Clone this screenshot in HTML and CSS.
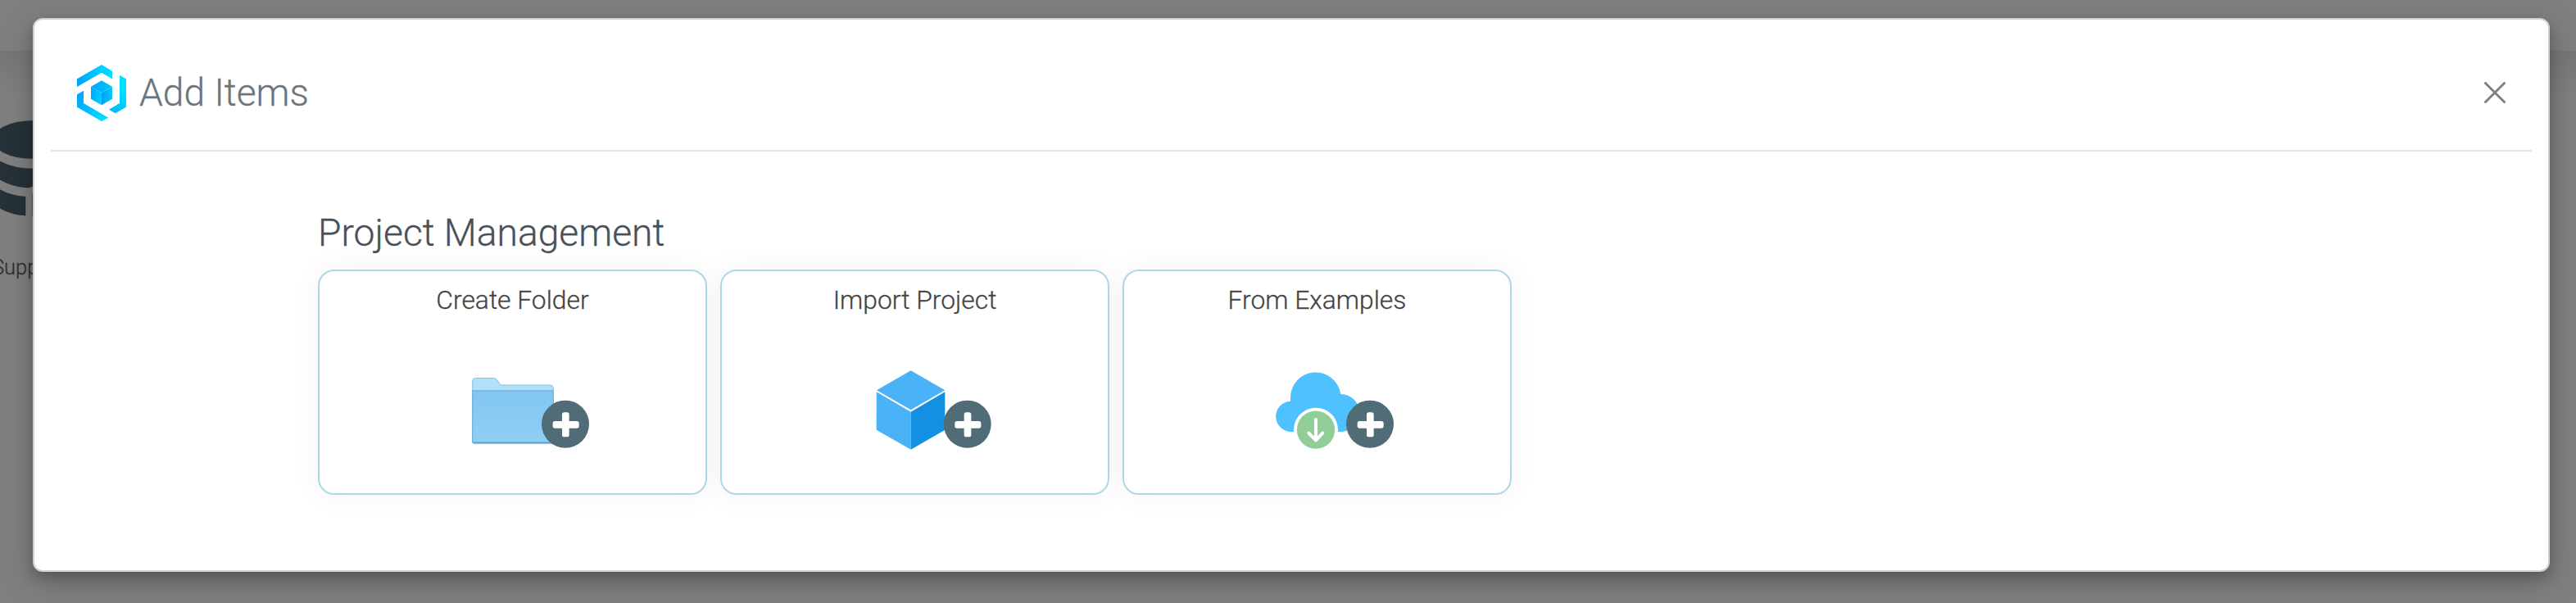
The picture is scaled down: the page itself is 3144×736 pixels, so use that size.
FILE: index.html
```html
<!DOCTYPE html>
<html lang="en">
<head>
<meta charset="utf-8">
<title>Add Items</title>
<link rel="stylesheet" href="styles.css">
</head>
<body>
<div class="page">
  <div class="page-nav"></div>
  <div class="page-body">
    <svg class="database" viewBox="0 420 126 380">
      <ellipse cx="114" cy="511" rx="138" ry="70"/>
      <path d="M-20 578Q40 617 126 617V675Q116 688 98 687Q30 683-20 644Z"/>
      <path d="M-20 680Q25 714 94 719V789Q30 786-20 750Z"/>
      <path class="database-badge" d="M126 706H121Q117 706 117 712V788Q117 794 121 794H126Z"/>
    </svg>
    <span class="page-label">Supp</span>
  </div>
</div>
<div class="modal">
  <header class="modal-header">
    <svg class="logo" viewBox="282 237 180 207">
      <defs>
        <linearGradient id="ringLow" gradientUnits="userSpaceOnUse" x1="282" y1="346" x2="397" y2="431"><stop offset="0" stop-color="#00a2ff"/><stop offset="1" stop-color="#00e1ff"/></linearGradient>
        <linearGradient id="ringRight" gradientUnits="userSpaceOnUse" x1="399" y1="400" x2="462" y2="340"><stop offset="0" stop-color="#00b4ff"/><stop offset="1" stop-color="#00e1ff"/></linearGradient>
        <linearGradient id="ringTop" gradientUnits="userSpaceOnUse" x1="282" y1="300" x2="411" y2="250"><stop offset="0" stop-color="#00a2ff"/><stop offset="1" stop-color="#00e1ff"/></linearGradient>
        <linearGradient id="cubeTop" x1="0" y1="0" x2="1" y2="0"><stop offset="0" stop-color="#00a8ff"/><stop offset="1" stop-color="#00c4fd"/></linearGradient>
        <linearGradient id="cubeLeft" x1="0" y1="0" x2="1" y2="0"><stop offset="0" stop-color="#00a6ff"/><stop offset="1" stop-color="#00d2ff"/></linearGradient>
        <linearGradient id="cubeRight" x1="0" y1="0" x2="1" y2="0"><stop offset="0" stop-color="#009cf5"/><stop offset="1" stop-color="#00cdfb"/></linearGradient>
      </defs>
      <path fill="url(#ringTop)" d="M282 289 372 237 411 260V289L372 266 282 318Z"/>
      <path fill="url(#ringRight)" d="M438 275 462 289V392L422 415 399 401 438 378Z"/>
      <path fill="url(#ringLow)" d="M306 332V378L397 431 372 444 282 392V346Z"/>
      <path fill="url(#cubeLeft)" d="M333 317 372 339.500V385L333 362Z"/>
      <path fill="url(#cubeRight)" d="M411 317 372 339.500V385L411 362Z"/>
      <path fill="url(#cubeTop)" d="M372 295 411 317 372 340 333 317Z"/>
    </svg>
    <h1 class="modal-title">Add Items</h1>
    <svg class="close" viewBox="0 0 26 26"><path d="M1.500 1.500 24.500 24.500M24.500 1.500 1.500 24.500"/></svg>
  </header>
  <main class="modal-body">
    <h2 class="section-title">Project Management</h2>
    <div class="cards">
      <div class="card">
        <span class="card-label">Create Folder</span>
        <svg class="card-icon" viewBox="594 600 480 360">
          <defs><linearGradient id="folder" x1="0" y1="0" x2="0" y2="1"><stop offset="0" stop-color="#82c6f1"/><stop offset="1" stop-color="#90cff6"/></linearGradient></defs>
          <path d="M622 906H914" stroke="#dfe5e9" stroke-width="3"/>
          <path fill="#b2dffb" stroke="#8bbfdf" stroke-width="3" d="M620 714V676Q620 664.500 632 664.500H698Q706 664.500 710 671L718 683Q722 690 730 690H904Q916 690 916 702V714Z"/>
          <path fill="url(#folder)" d="M618 710H918V898Q918 904 912 904H624Q618 904 618 898Z"/>
          <path fill="none" stroke="#76b4dc" stroke-width="4" d="M620 711H916V897Q916 902 911 902H625Q620 902 620 897Z"/>
          <path d="M623 901H913" stroke="#609dc8" stroke-width="5"/>
          <circle class="plus-disc" cx="960" cy="833" r="87"/>
          <g class="plus-mark"><rect x="914" y="822" width="96" height="26" rx="8"/><rect x="948" y="790" width="26" height="90" rx="8"/></g>
        </svg>
      </div>
      <div class="card">
        <span class="card-label">Import Project</span>
        <svg class="card-icon" viewBox="598 360 480 360">
          <path fill="#4ab2f7" d="M756 397 881 469 756 541 631 469Z"/>
          <path fill="#4ab2f7" d="M630 475 756 548V686L630 614Z"/>
          <path fill="#1490e2" d="M881 475 756 548V686L881 614Z"/>
          <circle class="plus-disc" cx="963" cy="593" r="87"/>
          <g class="plus-mark"><rect x="917" y="582" width="96" height="26" rx="8"/><rect x="951" y="550" width="26" height="90" rx="8"/></g>
        </svg>
      </div>
      <div class="card">
        <span class="card-label">From Examples</span>
        <svg class="card-icon" viewBox="600 360 480 360">
          <path fill="#50c1ff" d="M680 621A56 56 0 0 1 675 509V500A92.500 92.500 0 0 1 859 483A69 69 0 0 1 859 621Z"/>
          <path fill="#fff" d="M687 622V614A81 81 0 0 1 849 614V622Z"/>
          <circle fill="#90cd97" cx="768" cy="614" r="69.500"/>
          <path fill="none" stroke="#fff" stroke-width="12" stroke-linecap="round" stroke-linejoin="round" d="M768 576V650M742 626 768 652 793 626"/>
          <circle class="plus-disc" cx="966" cy="593" r="87"/>
          <g class="plus-mark"><rect x="920" y="582" width="96" height="26" rx="8"/><rect x="954" y="550" width="26" height="90" rx="8"/></g>
        </svg>
      </div>
    </div>
  </main>
</div>
</body>
</html>
```
FILE: styles.css
```css
* { box-sizing: border-box; }
body {
  display: flow-root;
  margin: 0;
  height: 736px;
  overflow: hidden;
  background: #7f7f7f;
  font-family: Roboto, "Liberation Sans", sans-serif;
  font-weight: 300;
}
/* Dimmed page behind the dialog */
.page { position: absolute; inset: 0; }
.page-nav { height: 62px; }
.page-body {
  height: 674px;
  padding-top: 78px;
  background: linear-gradient(#767676, #7b7b7b 28px, #7f7f7f 52px);
}
.database { display: block; width: 42px; height: 127px; fill: #263238; }
.database .database-badge { fill: #3a5a70; }
.page-label {
  display: block;
  width: 200px;
  margin: 42px 0 0 -10px;
  font-size: 25.5px;
  line-height: 34px;
  color: #2c3035;
  -webkit-text-stroke: .3px #2c3035;
}
.modal {
  position: relative;
  width: 3072px;
  height: 676px;
  margin: 22px 0 0 40px;
  border: 2px solid #d1d1d1;
  border-radius: 12px;
  background: #fff;
  box-shadow: 0 8px 16px rgba(0, 0, 0, .2), 0 12px 40px rgba(0, 0, 0, .19);
}
.modal-header {
  display: flex;
  align-items: center;
  height: 161px;
  margin: 0 20px;
  padding: 18px 32px 0;
  border-bottom: 2px solid #dde6ec;
}
.logo { width: 60px; height: 69px; margin-top: 2px; }
.modal-title {
  margin: 1px auto 0 16px;
  font-size: 46.2px;
  font-weight: 300;
  line-height: 58px;
  color: #6c757d;
  -webkit-text-stroke: .3px #6c757d;
}
.close { width: 26px; height: 26px; fill: none; stroke: #808080; stroke-width: 3; stroke-linecap: round; }
.modal-body { padding: 70px 346px 0; }
.section-title {
  margin: 0;
  font-size: 46.2px;
  font-weight: 300;
  line-height: 58px;
  color: #495057;
  -webkit-text-stroke: .3px #495057;
}
.cards { display: flex; gap: 16px; margin-top: 16px; }
.card {
  display: flex;
  flex-direction: column;
  width: 475px;
  height: 275px;
  padding-top: 16px;
  border: 2px solid #add8e6;
  border-radius: 20px;
  background: #fff;
  box-shadow: 0 0 36px rgba(0, 0, 0, .05);
}
.card-label {
  font-size: 31.8px;
  line-height: 38px;
  text-align: center;
  color: #444;
  -webkit-text-stroke: .3px #444;
}
.card-icon { width: 160px; height: 120px; margin: 55px 0 0 178px; }
.plus-disc { fill: #506c77; }
.plus-mark { fill: #fff; }
```
